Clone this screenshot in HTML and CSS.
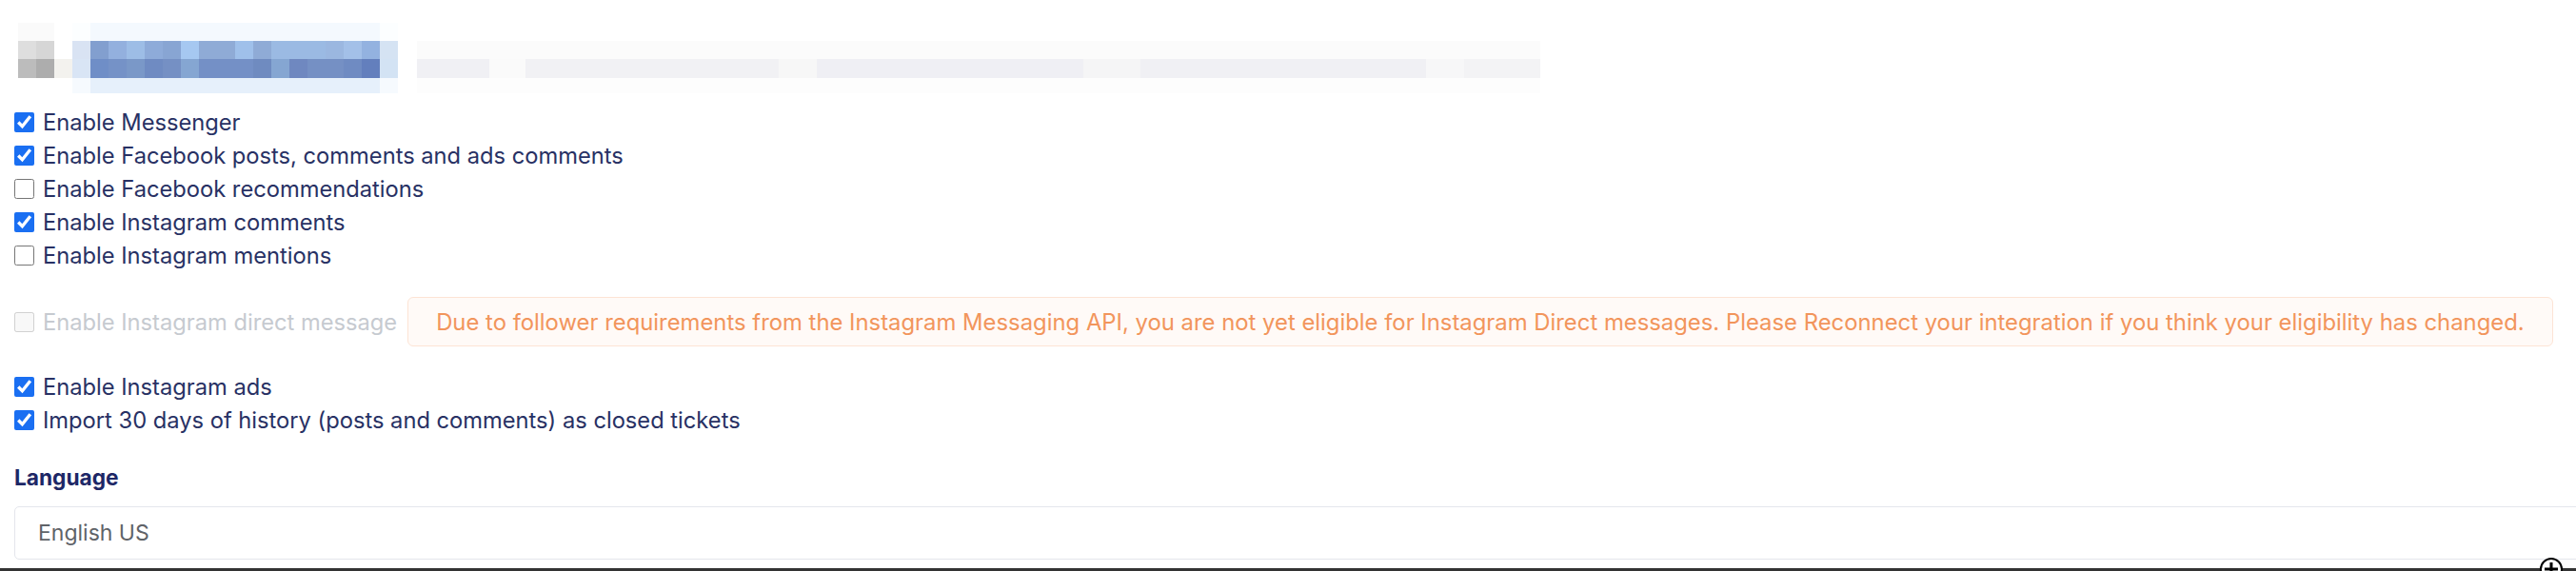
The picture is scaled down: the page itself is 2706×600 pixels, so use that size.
FILE: index.html
```html
<!DOCTYPE html>
<html lang="en">
<head>
    <meta charset="UTF-8">
    <meta name="viewport" content="width=device-width, initial-scale=1.0">
    <title>Facebook integration</title>
    <link rel="stylesheet" href="styles.css">
</head>
<body>
    <div class="page">
        <!-- redacted page title -->
        <div class="blur-head">
            <div class="blur blur-gray">
                <div class="row-a"></div><div class="row-b"></div><div class="row-c"></div><div class="row-d"></div>
            </div>
            <div class="blur blur-blue">
                <div class="row-a"></div><div class="row-b"></div><div class="row-c"></div><div class="row-d"></div>
            </div>
            <div class="blur blur-light">
                <div class="row-a"></div><div class="row-b"></div><div class="row-c"></div><div class="row-d"></div>
            </div>
        </div>

        <div class="options">
            <label class="option"><input type="checkbox" checked> Enable Messenger</label>
            <label class="option"><input type="checkbox" checked> Enable Facebook posts, comments and ads comments</label>
            <label class="option"><input type="checkbox"> Enable Facebook recommendations</label>
            <label class="option"><input type="checkbox" checked> Enable Instagram comments</label>
            <label class="option"><input type="checkbox"> Enable Instagram mentions</label>

            <div class="notice-row">
                <label class="option disabled"><input type="checkbox" disabled> Enable Instagram direct message</label>
                <div class="notice">Due to follower requirements from the Instagram Messaging API, you are not yet eligible for Instagram Direct messages. Please Reconnect your integration if you think your eligibility has changed.</div>
            </div>

            <label class="option"><input type="checkbox" checked> Enable Instagram ads</label>
            <label class="option"><input type="checkbox" checked> Import 30 days of history (posts and comments) as closed tickets</label>
        </div>

        <div class="field">
            <div class="field-label">Language</div>
            <div class="select">English US</div>
        </div>
    </div>
    <div class="bottom-bar"></div>
    <div class="cursor">
        <svg width="26" height="26" viewBox="0 0 26 26">
            <circle cx="13" cy="13" r="11" fill="#fff" stroke="#000" stroke-width="2"/>
            <path d="M13 6v14M6 13h14" stroke="#000" stroke-width="3"/>
        </svg>
    </div>
</body>
</html>
```

FILE: styles.css
```css
html, body {
    margin: 0;
    padding: 0;
    overflow: hidden;
    background-color: #fff;
}

body {
    font-family: Inter, "Noto Sans", sans-serif;
    color: #283164;
    height: 600px;
    position: relative;
}

.page {
    padding: 24px 0 0 15px;
}

/* pixelated title */
.blur-head {
    display: flex;
    height: 74px;
}

.blur div {
    width: 100%;
}

.row-a { height: 19px; }
.row-b { height: 19px; }
.row-c { height: 20px; }
.row-d { height: 16px; }

.blur-gray {
    width: 57px;
    margin-left: 4px;
}

.blur-gray .row-a { background: linear-gradient(to right, #fafafa 0 38px, transparent 38px); }
.blur-gray .row-b { background: linear-gradient(to right, #dedede 0 19px, #d6d6d6 19px 38px, transparent 38px); }
.blur-gray .row-c { background: linear-gradient(to right, #bcbcbc 0 19px, #adadad 19px 38px, #f3f2ee 38px 57px); }

.blur-blue {
    width: 342px;
}

.blur-blue .row-a { background: linear-gradient(to right, #fcfeff 0 19px, #f4f9fe 19px 323px, #fcfeff 323px); }
.blur-blue .row-b {
    background: linear-gradient(to right, #d9e3f3 0 19px, #829fcf 19px 38px, #93b0de 38px 57px, #9dbde6 57px 76px,
        #8eabd9 76px 95px, #88a5d3 95px 114px, #a6c8f1 114px 133px, #8fabd6 133px 171px, #9fc0ea 171px 190px,
        #8fabd6 190px 209px, #9bbae3 209px 266px, #9bb7e0 266px 285px, #a3c0e8 285px 304px, #93b2e0 304px 323px,
        #d5e3f3 323px 342px);
}
.blur-blue .row-c {
    background: linear-gradient(to right, #d9e5f5 0 19px, #6f8ec7 19px 38px, #7592c7 38px 57px, #7a98c8 57px 76px,
        #6f8bc2 76px 95px, #7590c4 95px 114px, #85a6d2 114px 133px, #7490c6 133px 190px, #6f8bc0 190px 209px,
        #85a6d2 209px 228px, #6f88c0 228px 247px, #7590c4 247px 285px, #6f8bc2 285px 304px, #637fbd 304px 323px,
        #d3e3f4 323px 342px);
}
.blur-blue .row-d { background: linear-gradient(to right, #f6fafe 0 19px, #e6f0fb 19px 323px, #f6fafe 323px); }

.blur-light {
    width: 1180px;
    margin-left: 20px;
}

.blur-light .row-b { background: #fbfbfb; }
.blur-light .row-c {
    background: linear-gradient(to right, #f0f0f4 0 76px, #fafafa 76px 114px, #f1f1f4 114px 380px, #f7f7f7 380px 420px,
        #efeff4 420px 700px, #f5f5f6 700px 760px, #f0f0f4 760px 1060px, #f7f7f8 1060px 1100px, #f3f3f5 1100px 1180px);
}
.blur-light .row-d { background: #fdfdfd; }

/* checkbox list */
.options {
    margin-top: 13px;
}

.option {
    display: flex;
    align-items: center;
    gap: 9px;
    height: 35px;
    font-size: 23.7px;
    color: #283164;
    white-space: nowrap;
}

.option input {
    width: 21px;
    height: 21px;
    margin: 0;
    accent-color: #1a6ff2;
}

.option.disabled {
    color: #c6cad0;
}

.notice-row {
    display: flex;
    align-items: center;
    gap: 11px;
    margin: 26px 0 25px;
}

.notice {
    flex: 1;
    margin-right: 24px;
    height: 50px;
    display: flex;
    align-items: center;
    padding: 0 29px;
    background-color: #fffaf7;
    border: 1px solid #fde4d5;
    border-radius: 6px;
    color: #f2955c;
    font-size: 23.85px;
    white-space: nowrap;
}

/* language select */
.field {
    margin-top: 28px;
}

.field-label {
    font-size: 22.7px;
    font-weight: 700;
    color: #1d2766;
    line-height: 30px;
    margin-bottom: 15px;
}

.select {
    width: 2720px;
    height: 54px;
    display: flex;
    align-items: center;
    padding-left: 24px;
    border: 1px solid #e4e6ec;
    border-radius: 5px;
    color: #5f6368;
    font-size: 23px;
}

.bottom-bar {
    position: absolute;
    left: 0;
    right: 0;
    bottom: 0;
    height: 3px;
    background-color: #333;
}

.cursor {
    position: absolute;
    left: 2667px;
    top: 585px;
}
```
